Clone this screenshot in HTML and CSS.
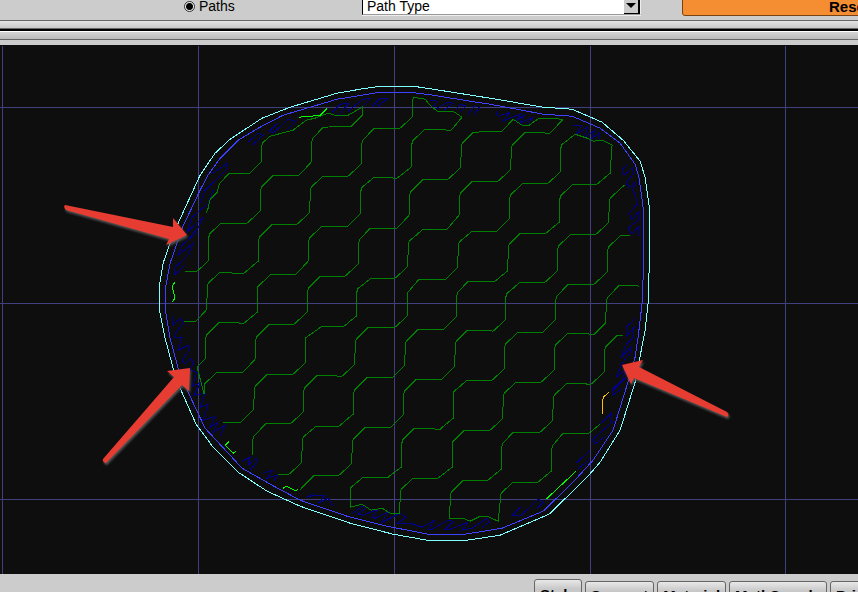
FILE: index.html
```html
<!DOCTYPE html>
<html lang="en">
<head>
<meta charset="utf-8">
<title>Path preview</title>
<link rel="stylesheet" href="styles.css">
</head>
<body>
<header class="toolbar">
  <label class="mode"><input type="radio" name="mode" checked>Paths</label>
  <div class="picker">
    <select aria-label="Path colouring"><option>Path Type</option></select>
    <span class="picker-arrow"></span>
  </div>
  <button class="reset" type="button">Reset</button>
</header>
<div class="rail rail-upper"></div>
<div class="rail rail-lower"></div>
<main class="stage">
<svg viewBox="0 45 858 529" preserveAspectRatio="xMidYMid slice" role="img" aria-label="Layer paths">
  <path class="lines grid" transform="translate(.5 .5)" d="M2 45V574M198 45V574M394 45V574M590 45V574M785 45V574M-1 107H858M-1 303H858M-1 499H858"/>
  <g class="lines" transform="translate(.1 .2)">
    <g class="solid">
      <path d="M252 145L263 135 258 133 248 142M277 123L269 131 273 133 288 119 296 121 287 130"/>
      <path d="M213 173L227 163 228 168 205 190 200 203M213 190L208 203 192 217 187 232 203 217 198 228 188 239M197 232L182 245 178 255 193 243 188 255 175 267 174 275 185 265"/>
      <path d="M173 316L172 325 181 318 183 323 174 335 176 338 182 337 178 350 188 345 189 350 182 360 185 364 191 358 193 363 190 370 197 372 192 386 200 383 194 395 205 393 200 407 208 404 203 420 215 416 210 427 218 422 213 432 225 425 220 436"/>
      <path d="M242 461L250 457 248 465 256 458 257 462 250 469M263 473L273 470 267 478 277 475 274 481M313 493L307 497 315 495 325 495 318 503 328 498 333 506"/>
      <path d="M353 513L362 506 367 507 358 514 363 515 378 509 372 517 375 518 388 512 382 522 400 513 406 517 397 523 410 523 422 527 435 520 428 529 432 529 448 520 453 521 445 529 450 529 468 522 462 530 472 528 487 518 489 522 482 527"/>
      <path d="M521 506L512 515 520 516 538 499 543 502 537 508M590 450L576 463M590 458L578 469M605 436L595 444 593 439 612 422 611 413 601 423M622 388L613 395 612 391 626 377"/>
      <path d="M636 318L626 327 626 337 634 327 633 337 627 343 621 357 631 347 630 353 622 363 616 377 625 370 623 379 612 389"/>
      <path d="M628 164L622 169 624 175 632 168 632 175 626 183 630 188 635 182 633 190 638 203 629 213 632 220 638 212 638 220 628 228 632 234 638 227 638 236"/>
      <path d="M573 125L582 125 576 134 587 127 585 137 595 130 591 139 599 133 598 139M496 111L498 116 510 112 502 121 520 114 517 120 525 114 520 123 533 117 527 124"/>
      <path d="M332 112L340 104 349 103 338 115M348 111L355 105M354 106L363 99 371 98 362 107M372 106L380 98 388 98 378 106M430 100L437 101 432 108M437 108L448 102 453 103 444 110M456 110L460 104 466 106 460 112M467 115L475 105M474 114L480 106"/>
    </g>
    <g class="infill">
      <path d="M206 213L208 208 210 199 217 192 219 184 229 173 250 173 261 162 262 143 270 136 293 130 306 120 315 118 328 113 335 115 348 115 362 107 362 115 351 126 323 127 312 139 311 162 299 175 273 175 261 187 260 211 247 223 221 223 209 234 208 261 197 271 185 271"/>
      <path d="M184 321L196 321 206 310 208 283 220 272 230 272 232 273 244 273 258 261 259 237 272 224 297 224 309 213 311 187 323 176 348 176 361 164 362 141 374 128 400 128 412 117 413 97 425 99 430 105 437 111 453 111 462 117 451 130 425 129 412 141 411 167 397 178 374 177 361 188 360 214 348 226 322 226 309 238 308 261 296 274 271 274 257 287 257 312 244 323 219 322 206 335 205 359 197 367 204 394 204 384 217 372 243 372 255 359 256 337 269 324 294 324 307 312 308 288 320 276 345 276 358 264 359 240 370 228 397 228 409 215 410 192 423 179 448 179 460 168 462 143 473 132 502 131 513 119 522 125 529 125 539 118 563 119 550 133 525 132 512 145 510 170 498 181 472 181 460 193 459 215 447 229 423 229 409 241 407 267 395 278 371 278 357 289 356 316 344 326 322 326 305 338 305 363 293 374 267 374 255 386 253 410 241 422 223 422"/>
      <path d="M252 455L253 437 266 423 291 423 303 412 304 388 317 375 342 376 354 365 356 339 368 327 395 327 407 316 407 293 419 279 446 279 457 268 459 242 472 231 497 231 509 219 510 195 523 183 548 183 560 172 561 145 575 134 587 138 593 141 602 140 612 145 610 173 597 184 573 184 560 196 559 222 546 233 520 233 509 244 507 271 495 281 468 281 457 293 456 317 444 329 418 329 406 341 404 366 393 377 367 377 354 390 353 414 339 426 316 426 303 437 301 463 289 474 278 474"/>
      <path d="M300 490L302 487 314 475 339 475 351 464 353 439 365 427 391 427 403 415 404 391 416 379 442 379 454 367 456 341 467 330 487 330 493 331 505 320 506 294 520 282 545 282 557 271 558 246 571 234 596 234 608 223 610 198 623 186 625 185"/>
      <path d="M630 235L621 235 608 247 607 272 594 284 568 284 556 297 555 320 543 332 518 332 505 344 504 369 492 380 467 380 453 392 453 418 440 429 414 428 402 440 401 467 388 477 363 477 350 488 350 507 362 504 371 510 382 508 390 513 399 513 401 489 413 478 438 478 452 467 452 442 464 430 490 430 502 419 504 393 516 382 541 382 554 370 555 345 568 333 594 334 605 323 607 298 619 285 635 285 639 286"/>
      <path d="M623 335L617 335 605 347 604 372 591 384 567 383 554 395 552 421 540 432 513 432 502 444 501 469 488 480 463 480 451 492 449 518 463 518 470 521 480 516 487 516 498 521 501 493 513 482 538 482 551 471 552 446 563 433 589 433 600 424"/>
    </g>
    <path class="inner" d="M182 228L200 190 208 175 220 158 238 140 258 128 283 115 337 99 362 95 380 92 410 92 433 95 470 101 490 104 543 114 572 116 600 128 620 143 635 164 639 178 643 207 643 277 642 303 638 337 635 357 626 388 613 430 593 460 573 482 543 511 502 528 465 534 428 534 387 526 347 516 300 500 272 485 242 468 205 428 188 392 178 368 170 338 165 308 165 290 170 263 178 240Z"/>
    <path class="outer" d="M178 223L200 175 215 153 230 139 262 118 290 107 337 93 360 89 380 86 413 86 433 89 490 98 543 107 572 109 602 122 623 140 640 161 645 177 649 205 649 270 648 303 645 330 635 382 620 430 600 462 587 477 549 514 500 535 467 540 427 540 393 534 350 523 300 506 267 491 238 472 213 447 196 424 180 388 173 368 165 338 159 308 159 287 163 263 170 243Z"/>
    <path class="gap" d="M299 117L311 116 320 115 327 108M175 282L172 286 175 298 172 302M229 441L225 445 233 453 236 451M283 488L286 486 296 491 298 489M546 499L576 471"/>
    <path class="crown" d="M609 392L603 397 602 414"/>
  </g>
  <g class="arrows">
    <path d="M65 205Q63 207 66 210L169 239 166 245 187 235 173 218 173 227Z"/>
    <path d="M103 459Q102 462 106 463L182 385 189 391 190 368 167 371 174 377Z"/>
    <path d="M727 417Q730 415 727 412L639 367 643 360 622 365 631 384 634 378Z"/>
  </g>
</svg>
</main>
<nav class="tabs" aria-label="Settings">
  <button class="tab tab-active" type="button">Style</button>
  <button class="tab" type="button">Support</button>
  <button class="tab" type="button">Material</button>
  <button class="tab" type="button">Matl G-code</button>
  <button class="tab" type="button">Printer</button>
</nav>
</body>
</html>
```
FILE: styles.css
```css
* { box-sizing: border-box; }

body {
  margin: 0;
  height: 100vh;
  overflow: hidden;
  display: flex;
  flex-direction: column;
  background: #cccccc;
  color: #000;
  font: 14px/16px "Liberation Sans", Arial, sans-serif;
}

button, select { font: inherit; color: inherit; }

.toolbar {
  flex: none;
  height: 20px;
  padding: 0 0 4px 184px;
  display: flex;
  align-items: flex-end;
  overflow: hidden;
}

.mode {
  flex: none;
  width: 178px;
  display: flex;
  align-items: center;
  gap: 4px;
  padding-bottom: 2px;
}

.mode input {
  appearance: none;
  width: 11px;
  height: 11px;
  margin: 0;
  border: 1px solid #333;
  border-radius: 50%;
  background: radial-gradient(circle, #000 0 3px, #eee 4px);
}

.picker {
  flex: none;
  width: 279px;
  height: 24px;
  display: flex;
  border: 1px solid #999;
  border-left-color: #000;
  border-right-color: #eee;
  box-shadow: 0 1px #eee;
  background: #fff;
  margin-bottom: 1px;
}

.picker select {
  appearance: none;
  flex: 1;
  min-width: 0;
  padding: 5px 4px 0;
  border: 0;
  border-radius: 0;
  background: transparent;
}

.picker-arrow {
  width: 16px;
  display: grid;
  place-items: end center;
  padding-bottom: 5px;
  background: #ccc;
  border: 1px solid #000;
  border-width: 0 2px 1px 0;
}

.picker-arrow::before {
  content: "";
  border: 5px solid transparent;
  border-top-color: #000;
  border-bottom: 0;
}

.reset {
  flex: none;
  width: 340px;
  height: 26px;
  margin-left: 41px;
  padding: 7px 0 0 146px;
  text-align: left;
  font-weight: bold;
  font-size: 15px;
  background: #f58d33;
  border: 1px solid #7a4313;
  border-radius: 3px;
}

.rail { flex: none; }

.rail-upper {
  height: 11px;
  border-top: 1px solid #666;
  border-bottom: 2px solid #000;
  background: linear-gradient(#e4e4e4, #c8c8c8 7px, #666 7px);
}

.rail-lower {
  height: 14px;
  background: linear-gradient(#fff 1px, #d4d4d4 1px, #bbb 8px, #666 8px, #666 9px, #ccc 9px);
}

.stage {
  flex: 1;
  min-height: 0;
  background: #0e0e0e;
}

.stage svg { display: block; width: 100%; height: 100%; }

.lines { fill: none; stroke-width: 1; shape-rendering: crispEdges; }
.grid { stroke: #404080; }
.solid { stroke: #00008b; }
.infill { stroke: #008000; }
.inner { stroke: #4040ff; }
.outer { stroke: #80ffff; }
.gap { stroke: #00ff00; }
.crown { stroke: #ffc000; }
.arrows { fill: #e63c32; filter: drop-shadow(1px 2px 1px #555); }

.tabs {
  flex: none;
  height: 18px;
  padding: 5px 0 0 534px;
  display: flex;
  align-items: flex-start;
  gap: 3px;
  overflow: hidden;
}

.tab {
  flex: none;
  height: 26px;
  margin-top: 2px;
  padding: 3px 5px 0;
  font-size: 15px;
  font-weight: bold;
  background: linear-gradient(#e8e8e8, #c8c8c8 9px);
  border: 1px solid #666;
  border-radius: 3px 3px 0 0;
}

.tab-active {
  margin-top: 0;
  padding-top: 6px;
}
```
